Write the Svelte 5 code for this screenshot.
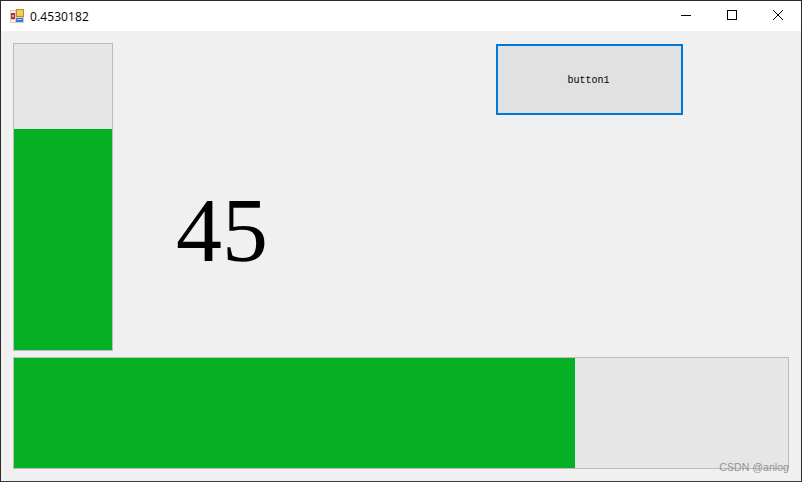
<script lang="ts">
  const value = 0.4530182;
  const percent = Math.trunc(value * 100);
  // bars are not exactly linear in the original form, fill sizes read from the screenshot
  const verticalFill = 72.3;
  const horizontalFill = 72.5;
</script>

<div class="window">
  <header class="titlebar">
    <svg class="app-icon" width="14" height="14" viewBox="0 0 14 14" aria-hidden="true">
      <rect x="0" y="1" width="14" height="13" fill="#cfcfcf" />
      <rect x="1" y="2" width="4" height="2" fill="#f4f4f4" />
      <rect x="1" y="4" width="4" height="6" fill="#b8302a" />
      <rect x="2" y="6" width="2" height="2" fill="#e8a0a0" />
      <rect x="6" y="0" width="8" height="8" fill="#b88e28" />
      <rect x="7" y="1" width="6" height="6" fill="#f6cc58" />
      <rect x="6" y="9" width="7" height="4" fill="#3f78c8" />
      <rect x="7" y="10" width="5" height="1" fill="#a8c8f0" />
      <rect x="1" y="11" width="4" height="2" fill="#f4f4f4" />
    </svg>
    <span class="title">{value}</span>
    <div class="controls">
      <button class="control" aria-label="Minimize">
        <svg width="10" height="10" viewBox="0 0 10 10"><path d="M0 5.5H10" stroke="#000" fill="none" /></svg>
      </button>
      <button class="control" aria-label="Maximize">
        <svg width="10" height="10" viewBox="0 0 10 10"><rect x="0.5" y="0.5" width="9" height="9" stroke="#000" fill="none" /></svg>
      </button>
      <button class="control" aria-label="Close">
        <svg width="10" height="10" viewBox="0 0 10 10"><path d="M0 0L10 10M10 0L0 10" stroke="#000" stroke-width="1" fill="none" /></svg>
      </button>
    </div>
  </header>

  <main class="client">
    <div class="top">
      <div class="bar vertical">
        <div class="fill" style="height: {verticalFill}%"></div>
      </div>
      <div class="number">{percent}</div>
      <button class="action">button1</button>
    </div>
    <div class="bar horizontal">
      <div class="fill" style="width: {horizontalFill}%"></div>
    </div>
    <span class="watermark">CSDN @anlog</span>
  </main>
</div>

<style>
  :global(body) {
    margin: 0;
    background: #f0f0f0;
  }

  .window {
    width: 802px;
    height: 482px;
    box-sizing: border-box;
    border: 1px solid #2b2b2b;
    border-bottom-color: #3a3a3a;
    display: flex;
    flex-direction: column;
    overflow: hidden;
    font-family: "Segoe UI", "Open Sans", "Noto Sans", sans-serif;
  }

  .titlebar {
    height: 30px;
    flex-shrink: 0;
    background: #fff;
    display: flex;
    align-items: center;
    padding-left: 9px;
  }

  .app-icon {
    margin-right: 6px;
    margin-top: -1px;
  }

  .title {
    font-family: "Open Sans", "Noto Sans", sans-serif;
    font-size: 12px;
    letter-spacing: 0.1px;
    color: #000;
    flex: 1;
  }

  .controls {
    display: flex;
    height: 100%;
  }

  .control {
    width: 46px;
    height: 30px;
    padding: 0;
    border: none;
    background: transparent;
    display: flex;
    align-items: center;
    justify-content: center;
  }

  .control svg {
    display: block;
    margin-top: -2px;
  }

  .client {
    position: relative;
    flex: 1;
    background: #f0f0f0;
    padding: 12px 12px 12px 12px;
    display: flex;
    flex-direction: column;
    gap: 6px;
  }

  .top {
    display: flex;
    height: 308px;
    align-items: flex-start;
  }

  .bar {
    box-sizing: border-box;
    background: #e6e6e6;
    border: 1px solid #bcbcbc;
    flex-shrink: 0;
    display: flex;
  }

  .fill {
    background: #06b025;
  }

  .vertical {
    width: 100px;
    height: 308px;
    flex-direction: column;
    justify-content: flex-end;
  }

  .vertical .fill {
    width: 100%;
  }

  .horizontal {
    width: 776px;
    height: 112px;
  }

  .horizontal .fill {
    height: 100%;
  }

  .number {
    width: 383px;
    padding: 135px 0 0 63px;
    box-sizing: border-box;
    font-family: "Liberation Serif", serif;
    font-size: 92px;
    line-height: 1.15;
    color: #000;
  }

  .action {
    width: 187px;
    height: 71px;
    margin-top: 1px;
    box-sizing: border-box;
    border: 2px solid #0078d7;
    background: #e1e1e1;
    font-family: "Liberation Mono", monospace;
    font-size: 10px;
    color: #000;
    padding: 1px 2px 0 0;
  }

  .watermark {
    position: absolute;
    right: 12px;
    bottom: 8px;
    font-family: "Liberation Sans", sans-serif;
    font-size: 10.6px;
    color: rgba(130, 130, 130, 0.85);
  }
</style>
